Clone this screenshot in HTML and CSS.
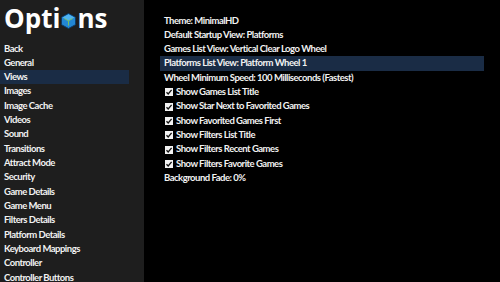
FILE: index.html
```html
<!DOCTYPE html>
<html lang="en">
<head>
  <meta charset="UTF-8" />
  <title>Options</title>
  <link rel="stylesheet" href="styles.css">
</head>
<body>
  <div class="screen">
    <div class="sidebar">
      <h1 class="title">Opti<svg class="cube" viewBox="0 0 15 16" width="15" height="16"><polygon points="7.5,0.5 14.5,4.3 14.5,11.7 7.5,15.5 0.5,11.7 0.5,4.3" fill="#2386d4" stroke="#0c3a66" stroke-width="1"/><polygon points="7.5,1.2 13.6,4.4 7.5,7.8 1.4,4.4" fill="#4fb3f0"/><polyline points="3.2,5.4 7.5,7.9 11.8,5.4" fill="none" stroke="#7ec45a" stroke-width="0.9"/><line x1="7.5" y1="7.9" x2="7.5" y2="12.6" stroke="#7ec45a" stroke-width="0.9"/></svg>ns</h1>
      <ul class="menu">
        <li>Back</li>
        <li>General</li>
        <li class="selected">Views</li>
        <li>Images</li>
        <li>Image Cache</li>
        <li>Videos</li>
        <li>Sound</li>
        <li>Transitions</li>
        <li>Attract Mode</li>
        <li>Security</li>
        <li>Game Details</li>
        <li>Game Menu</li>
        <li>Filters Details</li>
        <li>Platform Details</li>
        <li>Keyboard Mappings</li>
        <li>Controller</li>
        <li>Controller Buttons</li>
      </ul>
    </div>
    <div class="content">
      <ul class="settings">
        <li>Theme: MinimalHD</li>
        <li>Default Startup View: Platforms</li>
        <li>Games List View: Vertical Clear Logo Wheel</li>
        <li class="selected">Platforms List View: Platform Wheel 1</li>
        <li>Wheel Minimum Speed: 100 Milliseconds (Fastest)</li>
        <li class="check"><span class="box"><svg viewBox="0 0 8 8" width="8" height="8"><path d="M1.5 4.2 L3.2 6 L6.6 1.8" fill="none" stroke="#111" stroke-width="1.3"/></svg></span>Show Games List Title</li>
        <li class="check"><span class="box"><svg viewBox="0 0 8 8" width="8" height="8"><path d="M1.5 4.2 L3.2 6 L6.6 1.8" fill="none" stroke="#111" stroke-width="1.3"/></svg></span>Show Star Next to Favorited Games</li>
        <li class="check"><span class="box"><svg viewBox="0 0 8 8" width="8" height="8"><path d="M1.5 4.2 L3.2 6 L6.6 1.8" fill="none" stroke="#111" stroke-width="1.3"/></svg></span>Show Favorited Games First</li>
        <li class="check"><span class="box"><svg viewBox="0 0 8 8" width="8" height="8"><path d="M1.5 4.2 L3.2 6 L6.6 1.8" fill="none" stroke="#111" stroke-width="1.3"/></svg></span>Show Filters List Title</li>
        <li class="check"><span class="box"><svg viewBox="0 0 8 8" width="8" height="8"><path d="M1.5 4.2 L3.2 6 L6.6 1.8" fill="none" stroke="#111" stroke-width="1.3"/></svg></span>Show Filters Recent Games</li>
        <li class="check"><span class="box"><svg viewBox="0 0 8 8" width="8" height="8"><path d="M1.5 4.2 L3.2 6 L6.6 1.8" fill="none" stroke="#111" stroke-width="1.3"/></svg></span>Show Filters Favorite Games</li>
        <li>Background Fade: 0%</li>
      </ul>
    </div>
  </div>
</body>
</html>
```

FILE: styles.css
```css
html, body {
  margin: 0;
  height: 100%;
  background: #000;
}
body {
  font-family: Lato, "Open Sans", sans-serif;
  color: #f2f2f2;
  overflow: hidden;
}
.screen {
  display: flex;
  height: 100%;
}
.sidebar {
  width: 144px;
  flex-shrink: 0;
  background: #1e1e1e;
}
.title {
  margin: 0;
  height: 41.5px;
  padding-left: 4px;
  font-family: "Open Sans", sans-serif;
  font-size: 26px;
  font-weight: 700;
  line-height: 36px;
  color: #fff;
  white-space: nowrap;
}
.cube {
  vertical-align: -1px;
  margin: 0 1px;
}
ul {
  list-style: none;
  margin: 0;
  padding: 0;
}
li {
  height: 14.33px;
  line-height: 14.33px;
  padding-left: 4px;
  font-size: 9.5px;
  font-weight: 700;
  letter-spacing: -0.5px;
  white-space: nowrap;
}
.menu {
  width: 129px;
}
.selected {
  background: #1a2c45;
}
.content {
  padding: 13.5px 0 0 16px;
}
.settings {
  width: 324px;
}
.check {
  display: flex;
  align-items: center;
}
.box {
  display: inline-flex;
  width: 8px;
  height: 8px;
  background: #f2f2f2;
  margin: 0 3px 0 1px;
}
```
